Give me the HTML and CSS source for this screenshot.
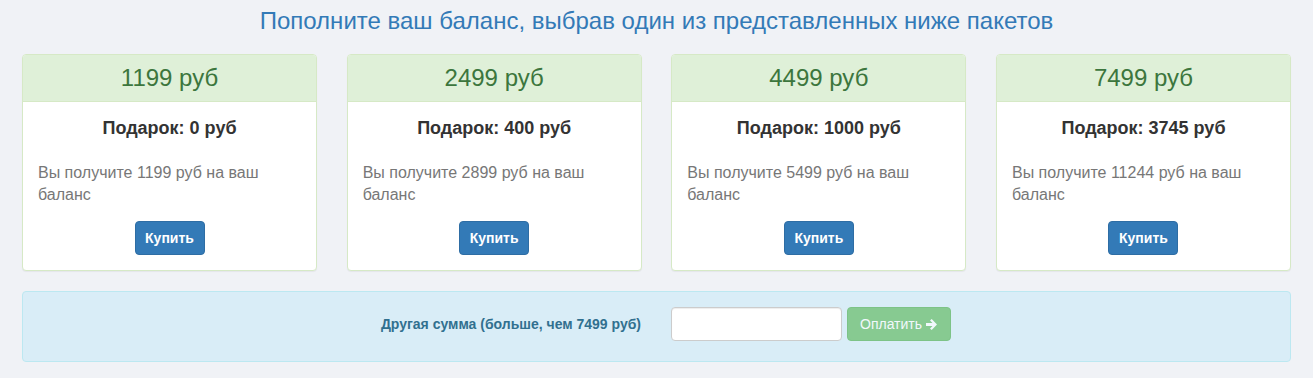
FILE: index.html
```html
<!DOCTYPE html>
<html lang="ru">
<head>
    <meta charset="UTF-8">
    <title>Пополнение баланса</title>
    <link rel="stylesheet" href="styles.css">
</head>

<body>
    <div class="page">
        <h3 class="title">Пополните ваш баланс, выбрав один из представленных ниже пакетов</h3>

        <div class="packages">
            <div class="panel">
                <div class="panel-heading">1199 руб</div>
                <div class="panel-body">
                    <h4>Подарок: 0 руб</h4>
                    <p>Вы получите 1199 руб на ваш баланс</p>
                    <button class="btn-buy">Купить</button>
                </div>
            </div>
            <div class="panel">
                <div class="panel-heading">2499 руб</div>
                <div class="panel-body">
                    <h4>Подарок: 400 руб</h4>
                    <p>Вы получите 2899 руб на ваш баланс</p>
                    <button class="btn-buy">Купить</button>
                </div>
            </div>
            <div class="panel">
                <div class="panel-heading">4499 руб</div>
                <div class="panel-body">
                    <h4>Подарок: 1000 руб</h4>
                    <p>Вы получите 5499 руб на ваш баланс</p>
                    <button class="btn-buy">Купить</button>
                </div>
            </div>
            <div class="panel">
                <div class="panel-heading">7499 руб</div>
                <div class="panel-body">
                    <h4>Подарок: 3745 руб</h4>
                    <p>Вы получите 11244 руб на ваш баланс</p>
                    <button class="btn-buy">Купить</button>
                </div>
            </div>
        </div>

        <form class="other-sum" onsubmit="return false">
            <label for="amount">Другая сумма (больше, чем 7499 руб)</label>
            <input type="text" id="amount">
            <button class="btn-pay" disabled>Оплатить
                <svg width="13" height="13" viewBox="0 0 13 13"><path d="M1 5h6.5L5 2.5 6.7 1 12 6.5 6.7 12 5 10.5 7.5 8H1z" fill="#fff"/></svg>
            </button>
        </form>
    </div>
</body>
</html>
```

FILE: styles.css
```css
body {
    margin: 0;
    background-color: #f0f2f6;
    font-family: 'Liberation Sans', Arial, sans-serif;
    font-size: 14px;
    color: #333;
}

.page {
    padding: 8px 22px 0;
}

.title {
    margin: 0 0 20px;
    font-size: 24px;
    font-weight: normal;
    line-height: 26px;
    text-align: center;
    color: #337ab7;
}

.packages {
    display: grid;
    grid-template-columns: repeat(4, 295px);
    justify-content: space-between;
    margin-bottom: 20px;
}

.panel {
    background-color: #fff;
    border: 1px solid #d6e9c6;
    border-radius: 4px;
    box-shadow: 0 1px 1px rgba(0, 0, 0, 0.05);
}

.panel-heading {
    background-color: #dff0d8;
    border-bottom: 1px solid #d6e9c6;
    border-radius: 3px 3px 0 0;
    color: #3c763d;
    font-size: 24px;
    line-height: 26px;
    padding: 10px 15px 10px;
    text-align: center;
}

.panel-body {
    padding: 15px;
    text-align: center;
}

.panel-body h4 {
    margin: 0;
    font-size: 18px;
    line-height: 22px;
}

.panel-body p {
    margin: 23px 0 15px;
    font-size: 16px;
    line-height: 22px;
    color: #777;
    text-align: left;
}

.btn-buy {
    font-family: inherit;
    font-size: 14px;
    font-weight: bold;
    line-height: 20px;
    padding: 6px 0;
    height: 34px;
    width: 70px;
    color: #fff;
    background-color: #337ab7;
    border: 1px solid #2e6da4;
    border-radius: 4px;
    cursor: pointer;
}

.other-sum {
    display: grid;
    grid-template-columns: 618px 171px auto;
    column-gap: 30px;
    align-items: center;
    background-color: #d9edf7;
    border: 1px solid #bce8f1;
    border-radius: 4px;
    padding: 15px 0 20px;
    margin: 0;
}

.other-sum label {
    text-align: right;
    font-size: 14px;
    font-weight: bold;
    color: #31708f;
}

.other-sum input {
    box-sizing: border-box;
    width: 171px;
    height: 34px;
    border: 1px solid #ccc;
    border-radius: 4px;
    background-color: #fff;
    box-shadow: inset 0 1px 1px rgba(0, 0, 0, 0.075);
    font-family: inherit;
    font-size: 14px;
    padding: 6px 12px;
}

.btn-pay {
    justify-self: start;
    margin-left: -25px;
    display: flex;
    align-items: center;
    gap: 3px;
    height: 34px;
    padding: 6px 12px;
    font-family: inherit;
    font-size: 14px;
    color: #fff;
    background-color: #5cb85c;
    border: 1px solid #4cae4c;
    border-radius: 4px;
    opacity: 0.65;
}
```
